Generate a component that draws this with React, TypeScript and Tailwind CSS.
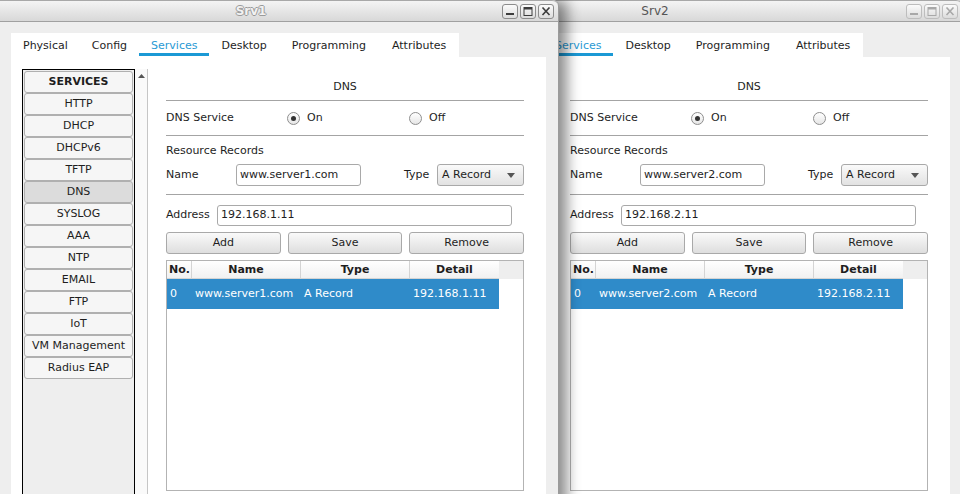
import React from 'react';

const FONT = "font-['DejaVu_Sans','Liberation_Sans',sans-serif]";

const TABS = ['Physical', 'Config', 'Services', 'Desktop', 'Programming', 'Attributes'];
const SERVICES = ['HTTP', 'DHCP', 'DHCPv6', 'TFTP', 'DNS', 'SYSLOG', 'AAA', 'NTP', 'EMAIL', 'FTP', 'IoT', 'VM Management', 'Radius EAP'];

const WinButton: React.FC<{ kind: 'min' | 'max' | 'close'; active: boolean }> = ({ kind, active }) => {
  const c = active ? '#3c3c3c' : '#a8a8a8';
  return (
    <div className={`w-[16px] h-[15px] rounded-[3px] border flex items-center justify-center bg-linear-to-b from-[#fbfbfb] to-[#dcdcdc] ${active ? 'border-[#8c8c8c]' : 'border-[#bdbdbd]'}`}>
      <svg width="10" height="9" viewBox="0 0 10 9">
        {kind === 'min' && <rect x="1" y="6" width="8" height="2" fill={c} />}
        {kind === 'max' && (
          <>
            <rect x="1" y="0.5" width="8" height="8" fill="none" stroke={c} strokeWidth="1" />
            <rect x="1" y="0.5" width="8" height="2" fill={c} />
          </>
        )}
        {kind === 'close' && <path d="M1.5 0.5 L8.5 8 M8.5 0.5 L1.5 8" stroke={c} strokeWidth="1.6" />}
      </svg>
    </div>
  );
};

const Radio: React.FC<{ checked?: boolean }> = ({ checked }) => (
  <div className="w-[13px] h-[13px] rounded-full border border-[#8e8e8e] bg-linear-to-b from-white to-[#e6e6e6] flex items-center justify-center">
    {checked && <div className="w-[5px] h-[5px] rounded-full bg-[#333333]" />}
  </div>
);

const PushButton: React.FC<{ label: string }> = ({ label }) => (
  <div className="h-[22px] rounded-[3px] border border-[#a9a9a9] bg-linear-to-b from-[#fafafa] to-[#dedede] flex items-center justify-center">
    {label}
  </div>
);

const DnsPanel: React.FC<{ name: string; ip: string }> = ({ name, ip }) => (
  <div className="w-[358px] flex flex-col text-[11px] text-[#1e1e1e]">
    <div className="h-[31px] flex items-end justify-center pb-[6px] leading-[14px]">DNS</div>
    <div className="border-t border-[#a4a4a4] h-[35px] flex items-center">
      <span className="w-[121px]">DNS Service</span>
      <div className="w-[122px] flex items-center gap-[7px]">
        <Radio checked />
        <span>On</span>
      </div>
      <div className="flex items-center gap-[7px]">
        <Radio />
        <span>Off</span>
      </div>
    </div>
    <div className="border-t border-[#a4a4a4] pt-[8px] leading-[14px]">Resource Records</div>
    <div className="mt-[6px] h-[22px] flex items-center">
      <span className="w-[70px]">Name</span>
      <div className="w-[125px] h-[22px] border border-[#a9a9a9] rounded-[3px] bg-white px-[3px] flex items-center">{name}</div>
      <span className="ml-[43px] w-[33px]">Type</span>
      <div className="w-[87px] h-[22px] border border-[#a9a9a9] rounded-[3px] bg-linear-to-b from-[#fafafa] to-[#e2e2e2] pl-[4px] pr-[8px] flex items-center justify-between">
        <span>A Record</span>
        <svg width="8" height="5" viewBox="0 0 8 5">
          <path d="M0 0 L8 0 L4 5 Z" fill="#555555" />
        </svg>
      </div>
    </div>
    <div className="mt-[8px] border-t border-[#a4a4a4]" />
    <div className="mt-[10px] h-[21px] flex items-center">
      <span className="w-[51px]">Address</span>
      <div className="w-[295px] h-[21px] border border-[#a9a9a9] rounded-[3px] bg-white px-[3px] flex items-center">{ip}</div>
    </div>
    <div className="mt-[6px] grid grid-cols-3 gap-[7px]">
      <PushButton label="Add" />
      <PushButton label="Save" />
      <PushButton label="Remove" />
    </div>
    <div className="mt-[6px] h-[231px] border border-[#b3b3b3] bg-white flex flex-col">
      <div className="h-[18px] flex font-bold bg-[#eeeeee]">
        <div className="w-[25px] pl-[2px] pt-[1px] flex items-center bg-linear-to-b from-white to-[#f1f1f1] border-r border-[#d4d4d4] border-b">No.</div>
        <div className="w-[109px] pt-[1px] flex items-center justify-center bg-linear-to-b from-white to-[#f1f1f1] border-r border-[#d4d4d4] border-b">Name</div>
        <div className="w-[109px] pt-[1px] flex items-center justify-center bg-linear-to-b from-white to-[#f1f1f1] border-r border-[#d4d4d4] border-b">Type</div>
        <div className="w-[89px] pt-[1px] flex items-center justify-center bg-linear-to-b from-white to-[#f1f1f1] border-b border-[#d4d4d4]">Detail</div>
      </div>
      <div className="h-[30px] w-[332px] flex bg-[#2f8bc9] text-white">
        <div className="w-[25px] pl-[3px] flex items-center">0</div>
        <div className="w-[109px] pl-[3px] flex items-center">{name}</div>
        <div className="w-[109px] pl-[3px] flex items-center">A Record</div>
        <div className="w-[89px] pl-[3px] flex items-center">{ip}</div>
      </div>
    </div>
  </div>
);

const Sidebar: React.FC = () => (
  <div className="w-[126px] flex">
    <div className="w-[113px] border border-black bg-[#eeeeee] px-[1px] pt-[1px] flex flex-col text-[11px] text-[#1e1e1e]">
      <div className="h-[22px] rounded-[3px] border border-[#b0b0b0] bg-[#f6f6f6] flex items-center justify-center font-bold">SERVICES</div>
      {SERVICES.map((s) => (
        <div
          key={s}
          className={`h-[22px] rounded-[3px] border border-[#b0b0b0] flex items-center justify-center ${s === 'DNS' ? 'bg-[#dcdcdc]' : 'bg-[#f6f6f6]'}`}
        >
          {s}
        </div>
      ))}
    </div>
    <div className="w-[13px] bg-[#fafafa] border-r border-[#c6c6c6] flex flex-col">
      <div className="h-[13px] flex items-center justify-center">
        <svg width="7" height="4" viewBox="0 0 7 4">
          <path d="M0 4 L7 4 L3.5 0 Z" fill="#555555" />
        </svg>
      </div>
    </div>
  </div>
);

const Window: React.FC<{ title: string; active: boolean; name: string; ip: string; className: string }> = ({ title, active, name, ip, className }) => (
  <div className={`absolute top-0 w-[559px] h-[520px] flex flex-col bg-[#eeeeee] border-r border-[#9a9a9a] rounded-tr-[6px] ${FONT} ${className}`}>
    <div className="h-[22px] border-t border-b border-t-[#a8a8a8] border-b-[#a0a0a0] rounded-tr-[6px] bg-linear-to-b from-[#f4f4f4] to-[#d8d8d8] flex items-center">
      <div
        className={`flex-1 text-center text-[12px] ${active ? "font-bold text-[#f2f2f2] [text-shadow:1px_0_0_#9a9a9a,-1px_0_0_#9a9a9a,0_1px_0_#9a9a9a,0_-1px_0_#9a9a9a]" : 'text-[#555555]'}`}
      >
        {title}
      </div>
      <div className="flex gap-[2px] pr-[4px]">
        <WinButton kind="min" active={active} />
        <WinButton kind="max" active={active} />
        <WinButton kind="close" active={active} />
      </div>
    </div>
    <div className="flex-1 pl-[11px] pt-[11px] flex flex-col">
      <div className="w-[448px] h-[24px] bg-white flex text-[11px] text-[#1e1e1e]">
        {TABS.map((t) => (
          <div
            key={t}
            className={`relative pt-[2px] flex items-center ${t === 'Services' ? 'text-[#2a9ad4]' : ''} ${t === 'Programming' || t === 'Attributes' ? 'px-[13px]' : 'px-[12px]'}`}
          >
            {t}
            {t === 'Services' && <div className="absolute left-0 right-0 bottom-[1px] h-[3px] bg-[#1b99d5]" />}
          </div>
        ))}
      </div>
      <div className="w-[535px] flex-1 bg-white flex pl-[11px] pt-[12px] gap-[18px]">
        <Sidebar />
        <DnsPanel name={name} ip={ip} />
      </div>
    </div>
  </div>
);

export default function App() {
  return (
    <div className="relative w-[960px] h-[494px] overflow-hidden bg-[#eeeeee]">
      <Window title="Srv2" active={false} name="www.server2.com" ip="192.168.2.11" className="left-[404px]" />
      <Window
        title="Srv1"
        active
        name="www.server1.com"
        ip="192.168.1.11"
        className="left-0 z-10 shadow-[8px_0_14px_rgba(0,0,0,0.45)]"
      />
    </div>
  );
}
